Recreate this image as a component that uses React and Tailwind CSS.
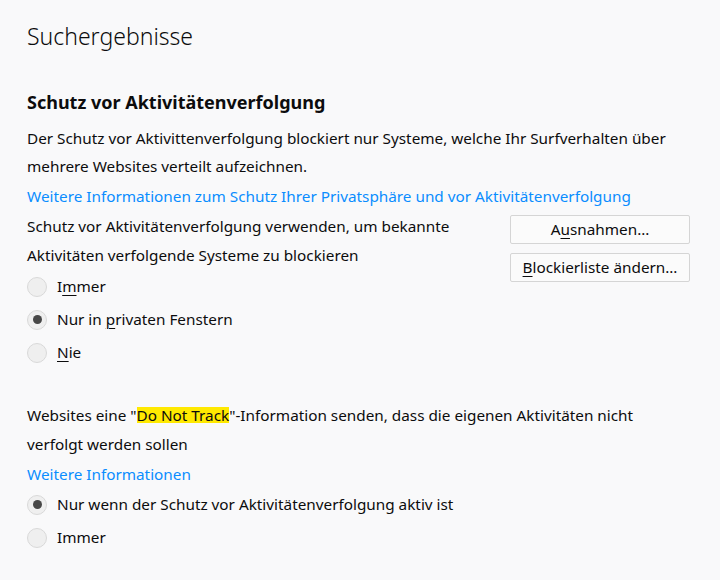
const font = { fontFamily: '"Noto Sans", "DejaVu Sans", sans-serif' };

function Key({ children }) {
  return <span className="underline underline-offset-[3px] decoration-[1px]">{children}</span>;
}

function Radio({ checked, children }) {
  return (
    <label className="flex items-center h-[33px]">
      <span className="w-[20px] h-[20px] rounded-full bg-[#efefef] border border-[#d9d9d9] flex items-center justify-center shrink-0">
        {checked && <span className="w-[9px] h-[9px] rounded-full bg-[#474747]" />}
      </span>
      <span className="ml-[10px]">{children}</span>
    </label>
  );
}

function Button({ children }) {
  return (
    <button className="w-[180px] h-[29px] bg-[#fbfbfb] border border-[#d5d5d5] rounded-[2px] text-[#0c0c0d] flex items-center justify-center">
      {children}
    </button>
  );
}

export default function App() {
  return (
    <div style={font} className="bg-[#f9f9fa] min-h-[580px] w-[720px] pl-[27px] pr-[30px] pt-[20px] text-[#0c0c0d] text-[15.3px]">
      <h1 className="text-[23px] leading-[32px] font-light">Suchergebnisse</h1>

      <h2 className="mt-[38px] text-[18px] leading-[24px] font-bold">Schutz vor Aktivitätenverfolgung</h2>
      <p className="mt-[10px] leading-[28px]">
        Der Schutz vor Aktivittenverfolgung blockiert nur Systeme, welche Ihr Surfverhalten über
        <br />
        mehrere Websites verteilt aufzeichnen.
      </p>
      <a className="block mt-[2px] leading-[28px] text-[#0a8dff]">
        Weitere Informationen zum Schutz Ihrer Privatsphäre und vor Aktivitätenverfolgung
      </a>

      <div className="flex mt-[2px]">
        <div className="flex-1">
          <p className="leading-[29px]">
            Schutz vor Aktivitätenverfolgung verwenden, um bekannte
            <br />
            Aktivitäten verfolgende Systeme zu blockieren
          </p>
          <div className="flex flex-col">
            <Radio>I<Key>m</Key>mer</Radio>
            <Radio checked>Nur in <Key>p</Key>rivaten Fenstern</Radio>
            <Radio><Key>N</Key>ie</Radio>
          </div>
        </div>
        <div className="flex flex-col gap-[9px] mt-[3px]">
          <Button>A<Key>u</Key>snahmen…</Button>
          <Button><Key>B</Key>lockierliste ändern…</Button>
        </div>
      </div>

      <p className="mt-[32px] leading-[29px]">
        Websites eine "<span className="inline-block leading-[16px] bg-[#ffe900]">Do Not Track</span>"-Information senden, dass die eigenen Aktivitäten nicht
        <br />
        verfolgt werden sollen
      </p>
      <a className="block mt-[1px] leading-[28px] text-[#0a8dff]">Weitere Informationen</a>
      <div className="flex flex-col">
        <Radio checked>Nur wenn der Schutz vor Aktivitätenverfolgung aktiv ist</Radio>
        <Radio>Immer</Radio>
      </div>
    </div>
  );
}
